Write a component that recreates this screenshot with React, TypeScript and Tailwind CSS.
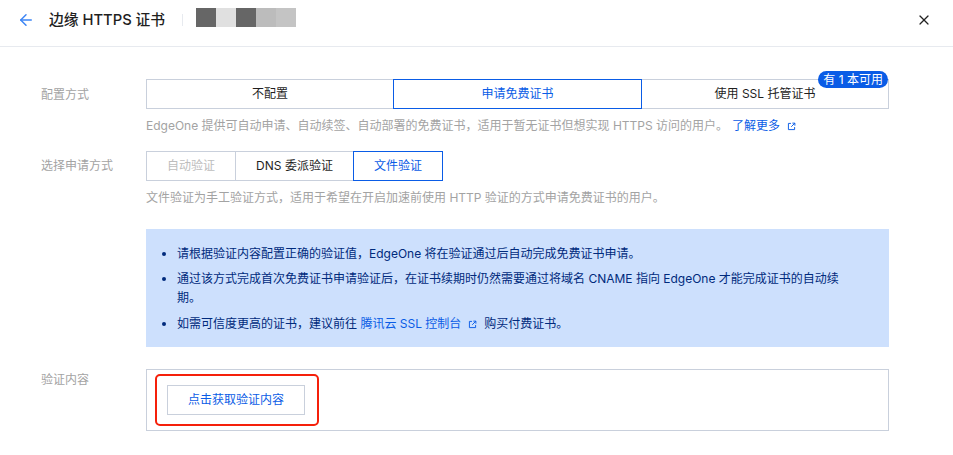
import { ArrowLeft, X } from "lucide-react";

const font = "font-['Inter','Noto_Sans_CJK_SC',sans-serif]";

function ExternalIcon() {
  return (
    <svg viewBox="0 0 16 16" className="inline-block h-[9px] w-[9px]" fill="none" stroke="#0a5ce6" strokeWidth="1.7">
      <path d="M7 2.5H2.5v11h11V9" />
      <path d="M9.5 2h4.5v4.5M14 2L7.5 8.5" />
    </svg>
  );
}

function Row({ label, top = "pt-[7px]", children }: { label: string; top?: string; children: React.ReactNode }) {
  return (
    <div className="flex pr-[64px]">
      <div className={`w-[146px] shrink-0 pl-[41px] ${top} text-[12px] leading-[16px] text-[#a3a3a3]`}>{label}</div>
      <div className="min-w-0 flex-1">{children}</div>
    </div>
  );
}

export default function App() {
  return (
    <div className={`${font} h-[455px] w-[953px] overflow-hidden bg-white`}>
      <header className="flex h-[47px] items-center border-b border-[#e7eaef] pb-[6px] pl-[17px] pr-[21px]">
        <ArrowLeft className="h-[18px] w-[18px] text-[#3d85f5]" strokeWidth={2} />
        <h1 className="ml-[14px] text-[14.75px] font-medium text-[#1f1f1f]">边缘 HTTPS 证书</h1>
        <div className="ml-[17px] h-[12px] w-px bg-[#e7eaef]" />
        <div className="mb-[5px] ml-[13px] flex h-[19px] blur-[0.5px]">
          <div className="w-[20px] bg-[#666666]" />
          <div className="w-[20px] bg-[#e0e0e0]" />
          <div className="w-[20px] bg-[#666666]" />
          <div className="w-[20px] bg-[#bcbcbc]" />
          <div className="w-[20px] bg-[#c4c4c4]" />
        </div>
        <X className="ml-auto h-[16px] w-[16px] text-[#222222]" strokeWidth={1.8} />
      </header>

      <main className="pt-[32px]">
        <Row label="配置方式" top="pt-[8px]">
          <div className="relative flex h-[30px] text-[12px] text-[#1f1f1f]">
            <div className="flex flex-1 items-center justify-center border border-[#c9d0dc]">不配置</div>
            <div className="-mx-px z-10 flex w-[249px] shrink-0 items-center justify-center border border-[#0a5ce6] text-[#0a5ce6]">申请免费证书</div>
            <div className="flex flex-1 items-center justify-center border border-[#c9d0dc]">使用 SSL 托管证书</div>
            <span className="absolute right-[1px] top-[-8px] z-20 rounded-full bg-[#0a5ce6] px-[5px] text-[12px] leading-[17px] text-white">有 1 本可用</span>
          </div>
          <p className="mt-[9px] flex items-center text-[12px] leading-[16px] text-[#a3a3a3]">
            EdgeOne 提供可自动申请、自动续签、自动部署的免费证书，适用于暂无证书但想实现 HTTPS 访问的用户。
            <span className="ml-[4px] text-[#0a5ce6]">了解更多</span>
            <span className="ml-[7px] flex"><ExternalIcon /></span>
          </p>
        </Row>

        <div className="mt-[17px]">
          <Row label="选择申请方式">
            <div className="flex h-[30px] text-[12px]">
              <div className="flex w-[90px] items-center justify-center border border-[#c9d0dc] text-[#bdbdbd]">自动验证</div>
              <div className="-ml-px flex w-[119px] items-center justify-center border border-[#c9d0dc] text-[#1f1f1f]">DNS 委派验证</div>
              <div className="-ml-px flex w-[90px] items-center justify-center border border-[#0a5ce6] text-[#0a5ce6]">文件验证</div>
            </div>
            <p className="mt-[9px] text-[12px] leading-[16px] text-[#a3a3a3]">文件验证为手工验证方式，适用于希望在开启加速前使用 HTTP 验证的方式申请免费证书的用户。</p>
          </Row>
        </div>

        <div className="mt-[23px] pl-[146px] pr-[64px]">
          <div className="h-[118px] bg-[#cde0fd] pl-[31px] pr-[50px] pt-[15px] text-[12px] leading-[19px] text-[#002a7c]">
            <ul className="flex list-disc flex-col gap-[6px] marker:text-[#002a7c]">
              <li>请根据验证内容配置正确的验证值，EdgeOne 将在验证通过后自动完成免费证书申请。</li>
              <li>通过该方式完成首次免费证书申请验证后，在证书续期时仍然需要通过将域名 CNAME 指向 EdgeOne 才能完成证书的自动续期。</li>
              <li className="pt-[1px]">
                如需可信度更高的证书，建议前往 <span className="text-[#0a5ce6]">腾讯云 SSL 控制台</span>
                <span className="ml-[7px] mr-[7px]"><ExternalIcon /></span>
                购买付费证书。
              </li>
            </ul>
          </div>
        </div>

        <div className="mt-[22px]">
          <Row label="验证内容" top="pt-[3px]">
            <div className="relative h-[62px] border border-[#c9d0dc] pl-[20px] pt-[15px]">
              <button type="button" className="h-[30px] w-[138px] border border-[#c9d0dc] bg-white text-[12px] text-[#0a5ce6]">点击获取验证内容</button>
              <div className="absolute left-[8px] top-[4px] h-[52px] w-[164px] rounded-[5px] border-[2.5px] border-[#f5200a]" />
            </div>
          </Row>
        </div>
      </main>
    </div>
  );
}
